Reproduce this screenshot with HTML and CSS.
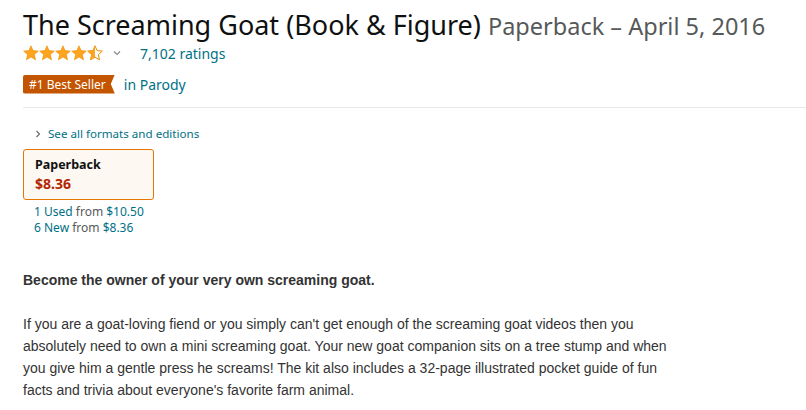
FILE: index.html
```html
<!DOCTYPE html>
<html>
<head>
<meta charset="utf-8">
<link rel="stylesheet" href="styles.css">
</head>
<body>
<div class="page">
  <h1 class="title"><span class="main">The Screaming Goat (Book &amp; Figure)</span> <span class="sub">Paperback – April 5, 2016</span></h1>
  <div class="rating">
    <span class="stars">
      <svg width="80" height="16" viewBox="0 0 80 16">
        <defs>
          <path id="st" d="M8 0.8 L10.1 5.6 L15.3 6.1 L11.4 9.6 L12.5 14.8 L8 12.1 L3.5 14.8 L4.6 9.6 L0.7 6.1 L5.9 5.6 Z"/>
          <clipPath id="half"><rect x="0" y="0" width="8" height="16"/></clipPath>
        </defs>
        <use href="#st" x="0" fill="#FFA41C" stroke="#E88B00" stroke-width="0.6"/>
        <use href="#st" x="16" fill="#FFA41C" stroke="#E88B00" stroke-width="0.6"/>
        <use href="#st" x="32" fill="#FFA41C" stroke="#E88B00" stroke-width="0.6"/>
        <use href="#st" x="48" fill="#FFA41C" stroke="#E88B00" stroke-width="0.6"/>
        <g transform="translate(64 0)">
          <use href="#st" fill="#fff" stroke="#E88B00" stroke-width="1"/>
          <use href="#st" fill="#FFA41C" clip-path="url(#half)"/>
        </g>
      </svg>
    </span>
    <svg class="caret" width="8" height="6" viewBox="0 0 8 6"><path d="M1 1.5 L4 4.5 L7 1.5" fill="none" stroke="#888" stroke-width="1.1"/></svg>
    <a class="link ratings">7,102 ratings</a>
  </div>
  <div class="bestseller">
    <span class="badge">#1 Best Seller</span>
    <a class="link cat">in Parody</a>
  </div>
  <hr class="divider">
  <div class="formats">
    <svg class="chev" width="6" height="8" viewBox="0 0 6 8"><path d="M1.5 1 L4.5 4 L1.5 7" fill="none" stroke="#666" stroke-width="1.1"/></svg>
    <a class="link">See all formats and editions</a>
  </div>
  <div class="card">
    <div class="fmt">Paperback</div>
    <div class="price">$8.36</div>
  </div>
  <div class="offers">
    <div><a class="link">1 Used</a> <span class="from">from</span> <a class="link">$10.50</a></div>
    <div><a class="link">6 New</a> <span class="from">from</span> <a class="link">$8.36</a></div>
  </div>
  <div class="desc">
    <p class="lead">Become the owner of your very own screaming goat.</p>
    <p class="body">If you are a goat-loving fiend or you simply can't get enough of the screaming goat videos then you absolutely need to own a mini screaming goat. Your new goat companion sits on a tree stump and when you give him a gentle press he screams! The kit also includes a 32-page illustrated pocket guide of fun facts and trivia about everyone's favorite farm animal.</p>
  </div>
</div>
</body>
</html>
```
FILE: styles.css
```css
html, body { margin: 0; padding: 0; background: #fff; }
body { font-family: "Noto Sans", "Open Sans", sans-serif; color: #0F1111; }
.page { padding: 8px 0 0 23px; }
.title { margin: 0; font-weight: 400; font-size: 27px; line-height: 34px; }
.title .main { color: #0F1111; }
.title .sub { color: #565959; font-size: 23.5px; }
.link { color: #007185; text-decoration: none; }
.rating { display: flex; align-items: center; height: 24px; margin-top: -2px; font-size: 14px; }
.stars { display: flex; }
.caret { margin-left: 10px; }
.ratings { margin-left: 19px; }
.bestseller { display: flex; align-items: center; margin-top: 9px; height: 20px; font-size: 14px; }
.badge { background: #C45500; color: #fff; font-size: 12px; line-height: 19px; padding: 0 9px 0 6px; clip-path: polygon(0 0, 100% 0, calc(100% - 4px) 50%, 100% 100%, 0 100%); border-radius: 2px 0 0 2px; }
.cat { margin-left: 9px; }
.divider { border: 0; border-top: 1px solid #e7e7e7; margin: 13px 0 0 0; }
.formats { display: flex; align-items: center; margin: 18px 0 0 12px; font-size: 11.6px; line-height: 16px; }
.chev { margin-right: 7px; }
.card { width: 118px; margin-top: 7px; border: 1px solid #E77600; border-radius: 3px; background: #FEF8F2; padding: 6px 0 5px 11px; }
.fmt { font-size: 12.5px; font-weight: 700; line-height: 18px; }
.price { font-size: 14px; font-weight: 700; color: #B12704; line-height: 20px; }
.offers { margin: 4px 0 0 11px; font-size: 12px; line-height: 16px; }
.from { color: #565959; }
.desc { width: 650px; font-family: "Liberation Sans", Arial, sans-serif; color: #333; }
.lead { font-weight: 700; font-size: 14px; margin: 35px 0 0 0; line-height: 18px; }
.body { font-size: 14px; line-height: 22px; margin: 24px 0 0 0; }
```
